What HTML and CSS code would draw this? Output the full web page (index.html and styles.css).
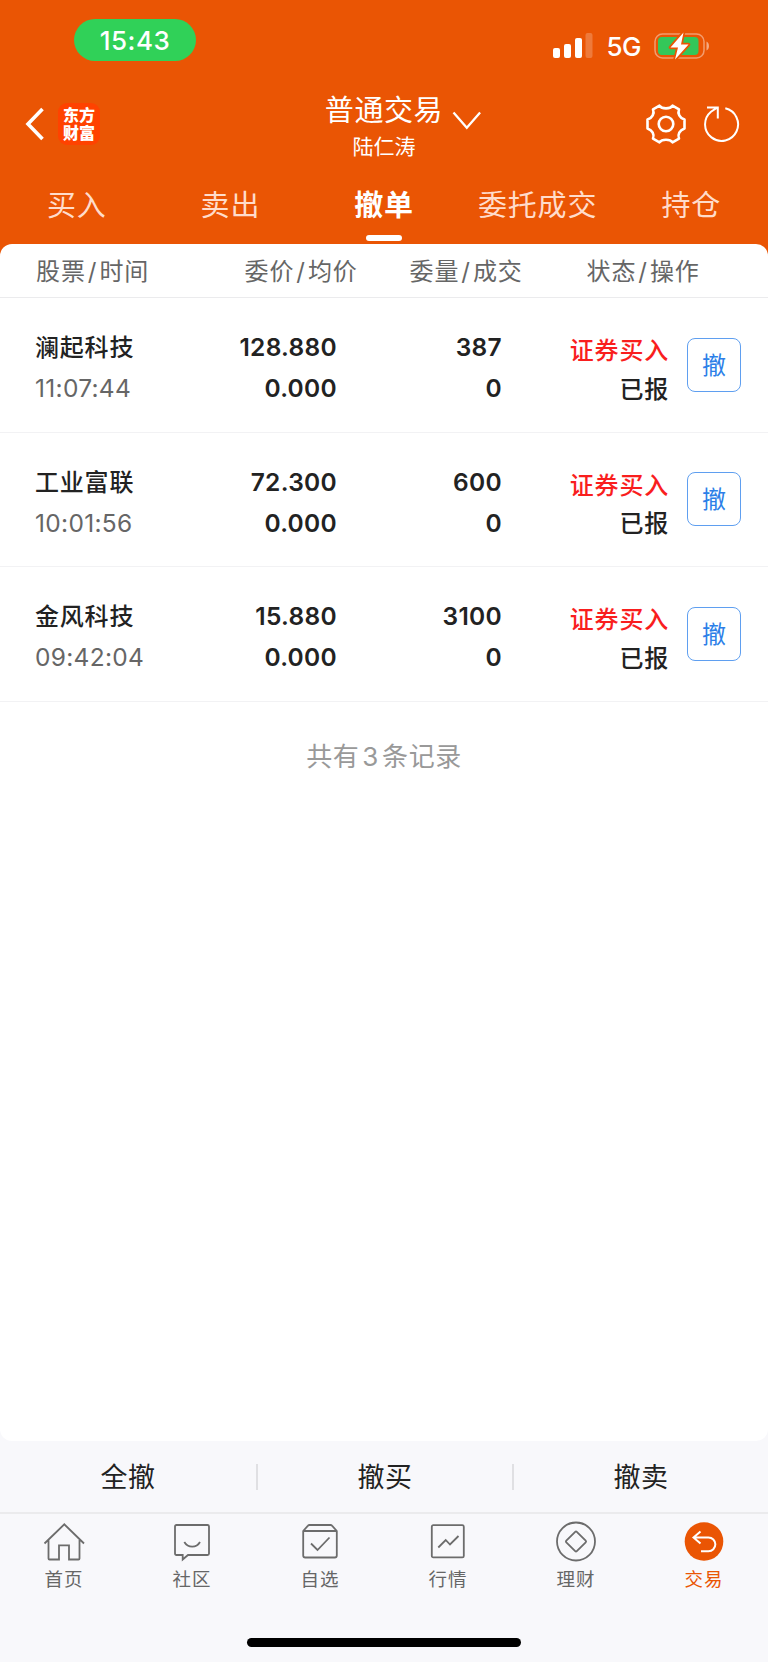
FILE: index.html
```html
<!DOCTYPE html>
<html lang="zh-CN">
<head>
  <meta charset="UTF-8" />
  <meta name="viewport" content="width=device-width, initial-scale=1.0"/>
  <title>普通交易 - 撤单</title>
  <link rel="stylesheet" href="styles.css">
</head>
<body>

  <!-- 顶部 -->
  <header>
    <div class="status-bar">
      <span class="clock">15:43</span>
      <div class="status-right">
        <svg class="signal" width="40" height="26" viewBox="0 0 40 26" fill="#fff">
          <rect x="0" y="15" width="7" height="10" rx="2"/>
          <rect x="11" y="11" width="7" height="14" rx="2"/>
          <rect x="22" y="5" width="7" height="20" rx="2"/>
          <rect x="32.500" y="0" width="7" height="25" rx="2" opacity=".22"/>
        </svg>
        <span class="network">5G</span>
        <svg class="battery" width="58" height="28" viewBox="0 0 58 28">
          <rect x="1" y="2" width="49" height="24" rx="7.500" fill="none" stroke="#fff" stroke-opacity=".42" stroke-width="1.500"/>
          <path d="M52.500 9.500c3.300 1.500 3.300 7.500 0 9z" fill="#fff" opacity=".5"/>
          <rect x="4" y="5" width="40.500" height="18" rx="4" fill="#34c759"/>
          <path d="M29.500 .500 16.500 15.500h7.500L21 27.500 34.500 12.500H27z" fill="#fff" stroke="#ea5504" stroke-width="3.500" stroke-linejoin="round" paint-order="stroke"/>
        </svg>
      </div>
    </div>

    <div class="nav">
      <div class="nav-left">
        <svg width="20" height="34" viewBox="0 0 20 34" fill="none" stroke="#fff" stroke-width="3.600">
          <path d="M17.500 2 3 17l14.500 15"/>
        </svg>
        <div class="logo">东方<br>财富</div>
      </div>
      <div class="nav-title">
        <h1>普通交易</h1>
        <p>陆仁涛</p>
        <svg class="arrow" width="30" height="20" viewBox="0 0 30 20" fill="none" stroke="#fff" stroke-width="2.300">
          <path d="M1.500 1.500 14.800 16.800 28.100 1.500"/>
        </svg>
      </div>
      <div class="nav-right">
        <svg width="42" height="42" viewBox="0 0 42 42" fill="none" stroke="#fff" stroke-width="2.600" stroke-linejoin="round">
          <path d="M14.500 2.700C17 6.200 25 6.200 27.500 2.700L34 6.400C32.400 10.300 34.500 14.800 39.500 16.500V25.500C34.500 27.200 32.400 31.700 34 35.600L27.500 39.300C25 35.800 17 35.800 14.500 39.300L8 35.600C9.600 31.700 7.500 27.200 2.500 25.500V16.500C7.500 14.800 9.600 10.300 8 6.400Z"/>
          <circle cx="21" cy="21" r="7.300"/>
        </svg>
        <svg width="38" height="38" viewBox="0 0 38 38" fill="none" stroke="#fff" stroke-width="2">
          <path d="M22.300 3.300A16.500 16.500 0 1 1 8 6.700L14.500 2.300M4 2.500h10.800V13.500"/>
        </svg>
      </div>
    </div>

    <div class="tabs">
      <a>买入</a>
      <a>卖出</a>
      <a class="active">撤单</a>
      <a>委托成交</a>
      <a>持仓</a>
    </div>
  </header>

  <!-- 委托列表 -->
  <main>
    <div class="list-head">
      <span>股票<i>/</i>时间</span>
      <span>委价<i>/</i>均价</span>
      <span>委量<i>/</i>成交</span>
      <span>状态<i>/</i>操作</span>
    </div>

    <div class="order">
      <div class="stock"><b>澜起科技</b><span>11:07:44</span></div>
      <div class="num"><b>128.880</b><b>0.000</b></div>
      <div class="num"><b>387</b><b>0</b></div>
      <div class="state"><b class="buy">证券买入</b><b>已报</b></div>
      <button>撤</button>
    </div>

    <div class="order">
      <div class="stock"><b>工业富联</b><span>10:01:56</span></div>
      <div class="num"><b>72.300</b><b>0.000</b></div>
      <div class="num"><b>600</b><b>0</b></div>
      <div class="state"><b class="buy">证券买入</b><b>已报</b></div>
      <button>撤</button>
    </div>

    <div class="order">
      <div class="stock"><b>金风科技</b><span>09:42:04</span></div>
      <div class="num"><b>15.880</b><b>0.000</b></div>
      <div class="num"><b>3100</b><b>0</b></div>
      <div class="state"><b class="buy">证券买入</b><b>已报</b></div>
      <button>撤</button>
    </div>

    <p class="total">共有<span>3</span>条记录</p>
  </main>

  <!-- 批量撤单 -->
  <div class="actions">
    <a>全撤</a>
    <a>撤买</a>
    <a>撤卖</a>
  </div>

  <!-- 底部导航 -->
  <footer>
    <nav class="tabbar">
      <a>
        <svg width="42" height="42" viewBox="0 0 42 42">
          <path d="M1.500 22.500 21.300 3.300 41 22.500M5.500 19V37.500Q5.500 38.500 6.500 38.500H16V24.300H26V38.500H35.500Q36.500 38.500 36.500 37.500V19"/>
        </svg>
        首页
      </a>
      <a>
        <svg width="42" height="42" viewBox="0 0 42 42">
          <path d="M5.500 4H36.500Q38 4 38 5.500V32.500Q38 34 36.500 34H17L11.700 38.500V34H5.500Q4 34 4 32.500V5.500Q4 4 5.500 4ZM13.300 21C17 27.200 25.500 27.200 29 21"/>
        </svg>
        社区
      </a>
      <a>
        <svg width="42" height="42" viewBox="0 0 42 42">
          <path d="M4.200 10 9 4.700Q9.600 4 10.500 4H31.500Q32.400 4 33 4.700L37.800 10V34.500Q37.800 36.500 35.800 36.500H6.200Q4.200 36.500 4.200 34.500ZM4.200 10H37.800M12 22.500 18.500 29 30.500 16.500"/>
        </svg>
        自选
      </a>
      <a>
        <svg width="42" height="42" viewBox="0 0 42 42">
          <rect x="4.800" y="4.200" width="32" height="32.200" rx="1.500"/>
          <path d="M11.300 26.500 18.700 19 23 23.500 31.500 15"/>
        </svg>
        行情
      </a>
      <a>
        <svg width="42" height="42" viewBox="0 0 42 42">
          <circle cx="21" cy="20.500" r="19"/>
          <path d="M20.200 10.800Q21 10 21.800 10.800L30.700 19.700Q31.500 20.500 30.700 21.300L21.800 30.200Q21 31 20.200 30.200L11.300 21.300Q10.500 20.500 11.300 19.700Z"/>
        </svg>
        理财
      </a>
      <a class="active">
        <svg width="42" height="42" viewBox="0 0 42 42">
          <circle cx="21" cy="20.500" r="19.300" fill="#ea5504" stroke="none"/>
          <path d="M17.500 10.500 10.500 16.500 17.500 22.500M10.500 16.500H25.500A6.800 6.800 0 0 1 25.500 30.200H18" stroke="#fff" stroke-width="2"/>
        </svg>
        交易
      </a>
    </nav>
    <div class="home-indicator"></div>
  </footer>

</body>
</html>
```
FILE: styles.css
```css
* {
  box-sizing: border-box;
}

body {
  margin: 0;
  width: 768px;
  height: 1662px;
  display: flex;
  flex-direction: column;
  background-color: #f8f8fb;
  color: #222;
  font-family: Inter, "Noto Sans CJK SC", sans-serif;
}

h1, p {
  margin: 0;
}

svg {
  display: block;
  flex: none;
}

/* 顶部 */
header {
  height: 258px;
  background-color: #ea5504;
  color: #fff;
}

.status-bar {
  display: flex;
  justify-content: space-between;
  height: 80px;
  padding: 19px 56px 0 74px;
}

.clock {
  width: 122px;
  height: 42px;
  border-radius: 21px;
  background-color: #30d158;
  font-size: 26px;
  font-weight: 500;
  letter-spacing: 0.5px;
  line-height: 43px;
  text-align: center;
}

.status-right {
  display: flex;
  align-items: center;
  height: 54px;
}

.network {
  margin: 2px 13px 0 13px;
  font-size: 26px;
  font-weight: 500;
  letter-spacing: -0.5px;
  line-height: 30px;
}

.nav {
  display: grid;
  grid-template-columns: 200px 1fr 200px;
  height: 92px;
}

.nav-left {
  display: flex;
  align-items: center;
  gap: 13px;
  padding-left: 25px;
  height: 88px;
}

.logo {
  width: 42px;
  height: 42px;
  padding: 4px 0 0 5px;
  border-radius: 9px;
  background-color: #ff4200;
  font-size: 16px;
  font-weight: 900;
  line-height: 17.5px;
}

.nav-title {
  position: relative;
  text-align: center;
}

.nav-title h1 {
  margin-top: 12px;
  font-size: 29px;
  font-weight: 400;
  letter-spacing: 0.6px;
  line-height: 38px;
}

.nav-title p {
  margin-top: 4px;
  font-size: 21px;
  line-height: 26px;
}

.nav-title .arrow {
  position: absolute;
  left: 252px;
  top: 31px;
}

.nav-right {
  display: flex;
  align-items: center;
  justify-content: flex-end;
  gap: 16px;
  height: 88px;
  padding-right: 27px;
}

.tabs {
  display: grid;
  grid-template-columns: repeat(5, 1fr);
}

.tabs a {
  display: flex;
  flex-direction: column;
  align-items: center;
  color: #ffdccb;
  font-size: 29px;
  letter-spacing: 0.8px;
  line-height: 67px;
}

.tabs .active {
  color: #fff;
  font-weight: 700;
}

.tabs .active::after {
  content: "";
  width: 36px;
  height: 6px;
  margin-top: -4px;
  border-radius: 3px;
  background-color: #fff;
}

/* 委托列表 */
main {
  height: 1197px;
  margin-top: -14px;
  border-radius: 12px;
  background-color: #fff;
}

.list-head {
  display: grid;
  grid-template-columns: 208.5px 165px 177px 1fr;
  height: 54px;
  padding-left: 36px;
  border-bottom: 1px solid #ebebed;
  color: #666;
  font-size: 24px;
  letter-spacing: 0.9px;
  line-height: 56px;
}

.list-head i {
  margin: 0 2px;
  font-style: normal;
}

.order {
  display: grid;
  grid-template-columns: 135px 167px 165px 167px 54px;
  align-items: center;
  height: 134.5px;
  padding-left: 35px;
  border-bottom: 1px solid #f2f2f4;
  font-size: 24px;
}

.order b,
.order span {
  display: block;
  font-weight: 600;
  line-height: 41px;
}

.stock,
.num {
  padding-top: 7px;
}

.stock b,
.state b {
  font-weight: 500;
  letter-spacing: 0.8px;
}

.order .stock span {
  color: #666;
  font-size: 24.5px;
  font-weight: 400;
  letter-spacing: 0.3px;
}

.num {
  font-size: 24.5px;
  letter-spacing: 0.3px;
  text-align: right;
}

.state {
  padding-top: 12px;
  text-align: right;
}

.state b {
  line-height: 38.5px;
}

.order .buy {
  color: #f91e1e;
}

.order button {
  width: 54px;
  height: 54px;
  margin-left: 18px;
  padding: 2px 0 0;
  border: 1px solid #5f9ff0;
  border-radius: 8px;
  background: none;
  color: #2d7fe8;
  font-family: inherit;
  font-size: 24px;
  line-height: 50px;
}

.total {
  padding-top: 35px;
  color: #999;
  font-size: 26px;
  letter-spacing: 0.6px;
  line-height: 40px;
  text-align: center;
}

.total span {
  margin: 0 3px;
}

/* 批量撤单 */
.actions {
  display: grid;
  grid-template-columns: repeat(3, 1fr);
  align-items: center;
  height: 73px;
  border-bottom: 2px solid #ebebed;
}

.actions a {
  height: 26px;
  font-size: 27px;
  letter-spacing: 0.5px;
  line-height: 28px;
  text-align: center;
}

.actions a + a {
  border-left: 2px solid #e0e0e3;
}

/* 底部导航 */
.tabbar {
  display: grid;
  grid-template-columns: repeat(6, 1fr);
  height: 124px;
  padding-top: 7px;
}

.tabbar a {
  display: flex;
  flex-direction: column;
  align-items: center;
  color: #666;
  font-size: 18.5px;
  letter-spacing: 1px;
  line-height: 32px;
}

.tabbar svg {
  fill: none;
  stroke: #6c6c6c;
  stroke-width: 1.8;
}

.tabbar .active {
  color: #ea5504;
}

.home-indicator {
  width: 274px;
  height: 9px;
  margin: 0 auto;
  border-radius: 5px;
  background-color: #000;
}
```
